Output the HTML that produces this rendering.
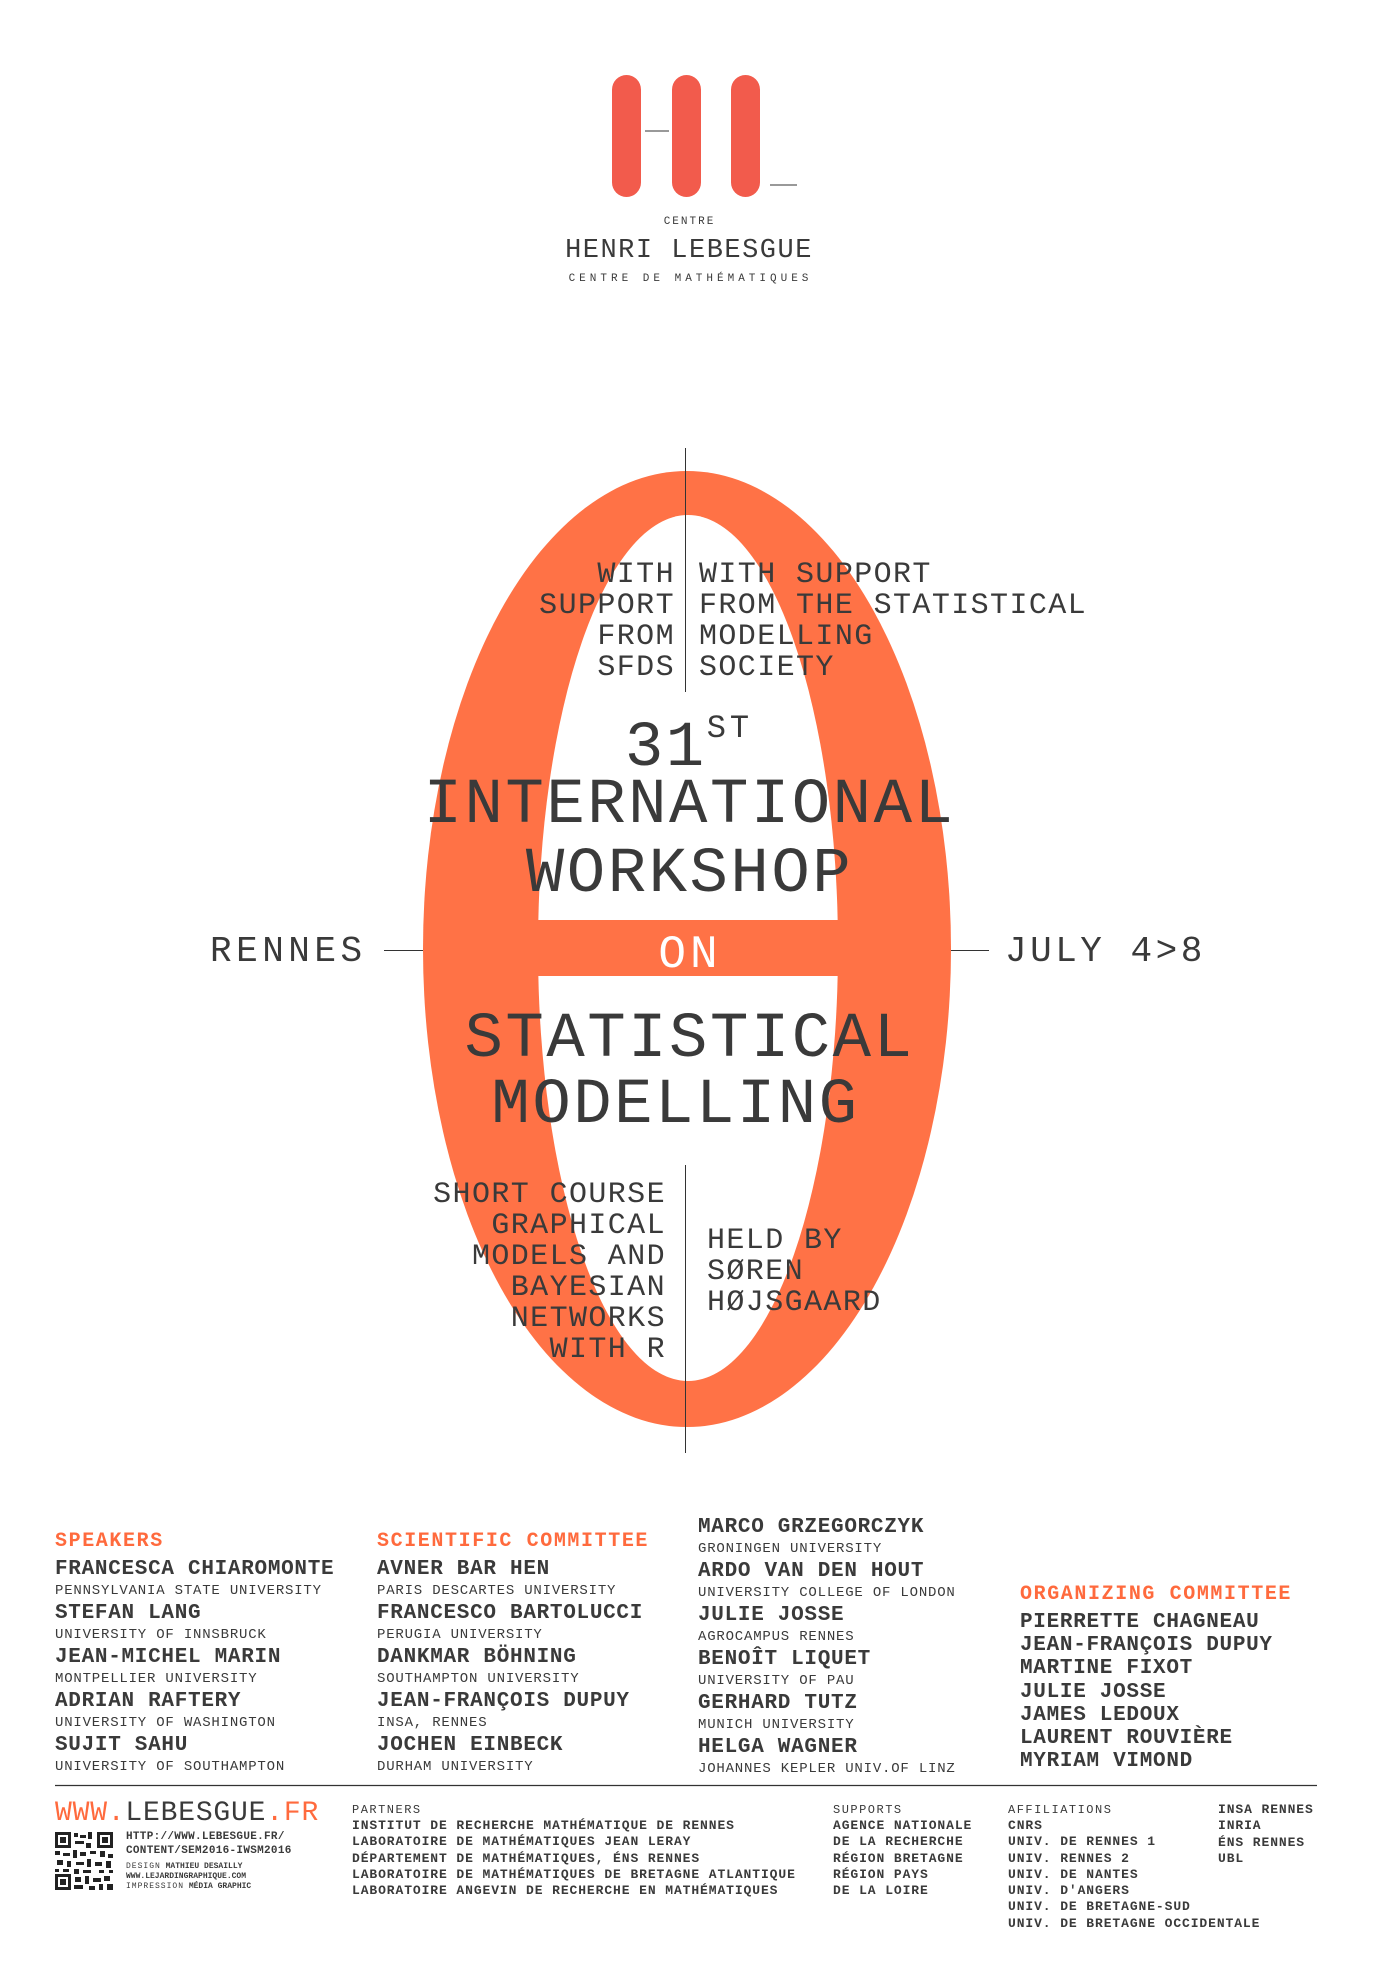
<!DOCTYPE html>
<html><head><meta charset="utf-8"><style>
*{margin:0;padding:0;box-sizing:border-box}
body{width:1377px;height:1969px;background:#fff;position:relative;overflow:hidden;font-family:"Liberation Mono",monospace;color:#3a3a3a}
.a{position:absolute;white-space:nowrap}
.c{left:188px;width:1000px;text-align:center}
.t{font-size:64px;letter-spacing:2.5px;line-height:70px}
.s{font-size:30px;letter-spacing:1.4px;line-height:31px}
.or{color:#ff6a3d}
.h{font-size:20px;font-weight:bold;letter-spacing:1.6px;line-height:22px;color:#ff6a3d}
.n{font-size:21px;font-weight:bold;letter-spacing:0.7px;line-height:22px}
.f{font-size:14px;letter-spacing:0.8px;line-height:20px;margin-bottom:2px}
.o{font-size:21px;font-weight:bold;letter-spacing:0.7px;line-height:23.2px}
.ft{font-size:13px;font-weight:bold;letter-spacing:0.9px;line-height:16.3px}
.fl{font-size:12px;letter-spacing:1.5px;line-height:16px;font-weight:normal}
</style></head><body>
<svg class="a" style="left:0;top:0" width="1377" height="1969">
<rect x="612" y="75" width="29" height="122" rx="14.5" fill="#f25b4c"/>
<rect x="672" y="75" width="29" height="122" rx="14.5" fill="#f25b4c"/>
<rect x="731" y="75" width="29" height="122" rx="14.5" fill="#f25b4c"/>
<line x1="645" y1="131" x2="669" y2="131" stroke="#333" stroke-width="1"/>
<line x1="770" y1="185" x2="797" y2="185" stroke="#333" stroke-width="1"/>
<ellipse cx="687" cy="949" rx="264" ry="478" fill="#ff7246"/>
<ellipse cx="688" cy="948" rx="150" ry="433" fill="#fff"/>
<rect x="536" y="920" width="304" height="56" fill="#ff7246"/>
<line x1="685.5" y1="448" x2="685.5" y2="692" stroke="#333" stroke-width="1"/>
<line x1="685.5" y1="1165" x2="685.5" y2="1453" stroke="#333" stroke-width="1"/>
<line x1="384" y1="950.5" x2="423" y2="950.5" stroke="#333" stroke-width="1"/>
<line x1="951" y1="950.5" x2="989" y2="950.5" stroke="#333" stroke-width="1"/>
<line x1="55" y1="1785.5" x2="1317" y2="1785.5" stroke="#333" stroke-width="1.2"/>
<g fill="#222" transform="translate(55,1832)">
<rect x="0" y="0" width="16" height="16"/><rect x="3" y="3" width="10" height="10" fill="#fff"/><rect x="5" y="5" width="6" height="6"/>
<rect x="42" y="0" width="16" height="16"/><rect x="45" y="3" width="10" height="10" fill="#fff"/><rect x="47" y="5" width="6" height="6"/>
<rect x="0" y="42" width="16" height="16"/><rect x="3" y="45" width="10" height="10" fill="#fff"/><rect x="5" y="47" width="6" height="6"/>
<rect x="19" y="1" width="4" height="4"/><rect x="25" y="3" width="6" height="3"/><rect x="33" y="0" width="4" height="7"/><rect x="20" y="9" width="9" height="3"/><rect x="31" y="11" width="5" height="5"/>
<rect x="0" y="19" width="5" height="4"/><rect x="8" y="21" width="7" height="3"/><rect x="18" y="18" width="4" height="8"/><rect x="25" y="20" width="6" height="4"/><rect x="35" y="19" width="6" height="3"/><rect x="45" y="19" width="5" height="6"/><rect x="53" y="22" width="5" height="4"/>
<rect x="2" y="28" width="6" height="5"/><rect x="12" y="29" width="4" height="6"/><rect x="21" y="30" width="8" height="3"/><rect x="32" y="27" width="4" height="8"/><rect x="40" y="30" width="7" height="4"/><rect x="51" y="29" width="5" height="7"/>
<rect x="0" y="37" width="4" height="3"/><rect x="8" y="37" width="6" height="3"/><rect x="19" y="37" width="5" height="5"/><rect x="28" y="38" width="8" height="3"/><rect x="44" y="38" width="5" height="3"/><rect x="54" y="38" width="4" height="3"/>
<rect x="20" y="45" width="6" height="5"/><rect x="30" y="44" width="4" height="8"/><rect x="38" y="46" width="8" height="4"/><rect x="49" y="44" width="6" height="5"/><rect x="19" y="53" width="9" height="4"/><rect x="34" y="54" width="6" height="4"/><rect x="44" y="52" width="4" height="6"/><rect x="52" y="52" width="6" height="6"/>
</g>
</svg>

<div class="a" style="left:0;width:1377px;text-align:center;top:214px;font-size:11px;letter-spacing:2px;line-height:16px;padding-left:2px">CENTRE</div>
<div class="a" style="left:0;width:1377px;text-align:center;top:235px;font-size:27px;letter-spacing:1.5px;line-height:32px;padding-left:1px">HENRI LEBESGUE</div>
<div class="a" style="left:0;width:1377px;text-align:center;top:271px;font-size:11px;letter-spacing:4px;line-height:16px;padding-left:4px">CENTRE DE MATHÉMATIQUES</div>

<div class="a s" style="right:702px;top:560px;text-align:right">WITH<br>SUPPORT<br>FROM<br>SFDS</div>
<div class="a s" style="left:699px;top:560px">WITH SUPPORT<br>FROM THE STATISTICAL<br>MODELLING<br>SOCIETY</div>

<div class="a c t" style="top:694px;padding-left:2px">31<span style="font-size:32px;vertical-align:28px;letter-spacing:4px">ST</span></div>
<div class="a c t" style="top:771px;padding-left:3px">INTERNATIONAL</div>
<div class="a c t" style="top:840px;padding-left:3px">WORKSHOP</div>
<div class="a c" style="top:927px;font-size:46px;letter-spacing:4px;line-height:56px;color:#fff;padding-left:4px">ON</div>
<div class="a c t" style="top:1005px;padding-left:3px">STATISTICAL</div>
<div class="a c t" style="top:1071px;padding-left:3px;margin-left:-14px">MODELLING</div>

<div class="a" style="left:210px;top:930px;font-size:36px;letter-spacing:4.5px;line-height:44px">RENNES</div>
<div class="a" style="left:1005px;top:930px;font-size:36px;letter-spacing:3.5px;line-height:44px">JULY 4&gt;8</div>

<div class="a s" style="right:711px;top:1180px;text-align:right">SHORT COURSE<br>GRAPHICAL<br>MODELS AND<br>BAYESIAN<br>NETWORKS<br>WITH R</div>
<div class="a s" style="left:707px;top:1226px">HELD BY<br>SØREN<br>HØJSGAARD</div>

<div class="a" style="left:55px;top:1531px">
<div class="h">SPEAKERS</div>
<div style="height:6px"></div>
<div class="n">FRANCESCA CHIAROMONTE</div><div class="f">PENNSYLVANIA STATE UNIVERSITY</div>
<div class="n">STEFAN LANG</div><div class="f">UNIVERSITY OF INNSBRUCK</div>
<div class="n">JEAN-MICHEL MARIN</div><div class="f">MONTPELLIER UNIVERSITY</div>
<div class="n">ADRIAN RAFTERY</div><div class="f">UNIVERSITY OF WASHINGTON</div>
<div class="n">SUJIT SAHU</div><div class="f">UNIVERSITY OF SOUTHAMPTON</div>
</div>
<div class="a" style="left:377px;top:1531px">
<div class="h">SCIENTIFIC COMMITTEE</div>
<div style="height:6px"></div>
<div class="n">AVNER BAR HEN</div><div class="f">PARIS DESCARTES UNIVERSITY</div>
<div class="n">FRANCESCO BARTOLUCCI</div><div class="f">PERUGIA UNIVERSITY</div>
<div class="n">DANKMAR BÖHNING</div><div class="f">SOUTHAMPTON UNIVERSITY</div>
<div class="n">JEAN-FRANÇOIS DUPUY</div><div class="f">INSA, RENNES</div>
<div class="n">JOCHEN EINBECK</div><div class="f">DURHAM UNIVERSITY</div>
</div>
<div class="a" style="left:698px;top:1517px">
<div class="n">MARCO GRZEGORCZYK</div><div class="f">GRONINGEN UNIVERSITY</div>
<div class="n">ARDO VAN DEN HOUT</div><div class="f">UNIVERSITY COLLEGE OF LONDON</div>
<div class="n">JULIE JOSSE</div><div class="f">AGROCAMPUS RENNES</div>
<div class="n">BENOÎT LIQUET</div><div class="f">UNIVERSITY OF PAU</div>
<div class="n">GERHARD TUTZ</div><div class="f">MUNICH UNIVERSITY</div>
<div class="n">HELGA WAGNER</div><div class="f">JOHANNES KEPLER UNIV.OF LINZ</div>
</div>
<div class="a" style="left:1020px;top:1584px">
<div class="h">ORGANIZING COMMITTEE</div>
<div style="height:5px"></div>
<div class="o">PIERRETTE CHAGNEAU<br>JEAN-FRANÇOIS DUPUY<br>MARTINE FIXOT<br>JULIE JOSSE<br>JAMES LEDOUX<br>LAURENT ROUVIÈRE<br>MYRIAM VIMOND</div>
</div>

<div class="a" style="left:55px;top:1797px;font-size:28px;letter-spacing:0.8px;line-height:34px"><span class="or">WWW.</span>LEBESGUE<span class="or">.FR</span></div>
<div class="a" style="left:126px;top:1830px;font-size:11px;font-weight:bold;line-height:14px;letter-spacing:0.3px">HTTP://WWW.LEBESGUE.FR/<br>CONTENT/SEM2016-IWSM2016</div>
<div class="a" style="left:126px;top:1862px;font-size:8px;font-weight:bold;line-height:10px">
<span style="font-weight:normal;letter-spacing:1px">DESIGN</span> MATHIEU DESAILLY<br>WWW.LEJARDINGRAPHIQUE.COM<br><span style="font-weight:normal;letter-spacing:1px">IMPRESSION</span> MÉDIA GRAPHIC</div>

<div class="a ft" style="left:352px;top:1802px"><div class="fl">PARTNERS</div>INSTITUT DE RECHERCHE MATHÉMATIQUE DE RENNES<br>LABORATOIRE DE MATHÉMATIQUES JEAN LERAY<br>DÉPARTEMENT DE MATHÉMATIQUES, ÉNS RENNES<br>LABORATOIRE DE MATHÉMATIQUES DE BRETAGNE ATLANTIQUE<br>LABORATOIRE ANGEVIN DE RECHERCHE EN MATHÉMATIQUES</div>
<div class="a ft" style="left:833px;top:1802px"><div class="fl">SUPPORTS</div>AGENCE NATIONALE<br>DE LA RECHERCHE<br>RÉGION BRETAGNE<br>RÉGION PAYS<br>DE LA LOIRE</div>
<div class="a ft" style="left:1008px;top:1802px"><div class="fl">AFFILIATIONS</div>CNRS<br>UNIV. DE RENNES 1<br>UNIV. RENNES 2<br>UNIV. DE NANTES<br>UNIV. D'ANGERS<br>UNIV. DE BRETAGNE-SUD<br>UNIV. DE BRETAGNE OCCIDENTALE</div>
<div class="a ft" style="left:1218px;top:1802px">INSA RENNES<br>INRIA<br>ÉNS RENNES<br>UBL</div>
</body></html>
